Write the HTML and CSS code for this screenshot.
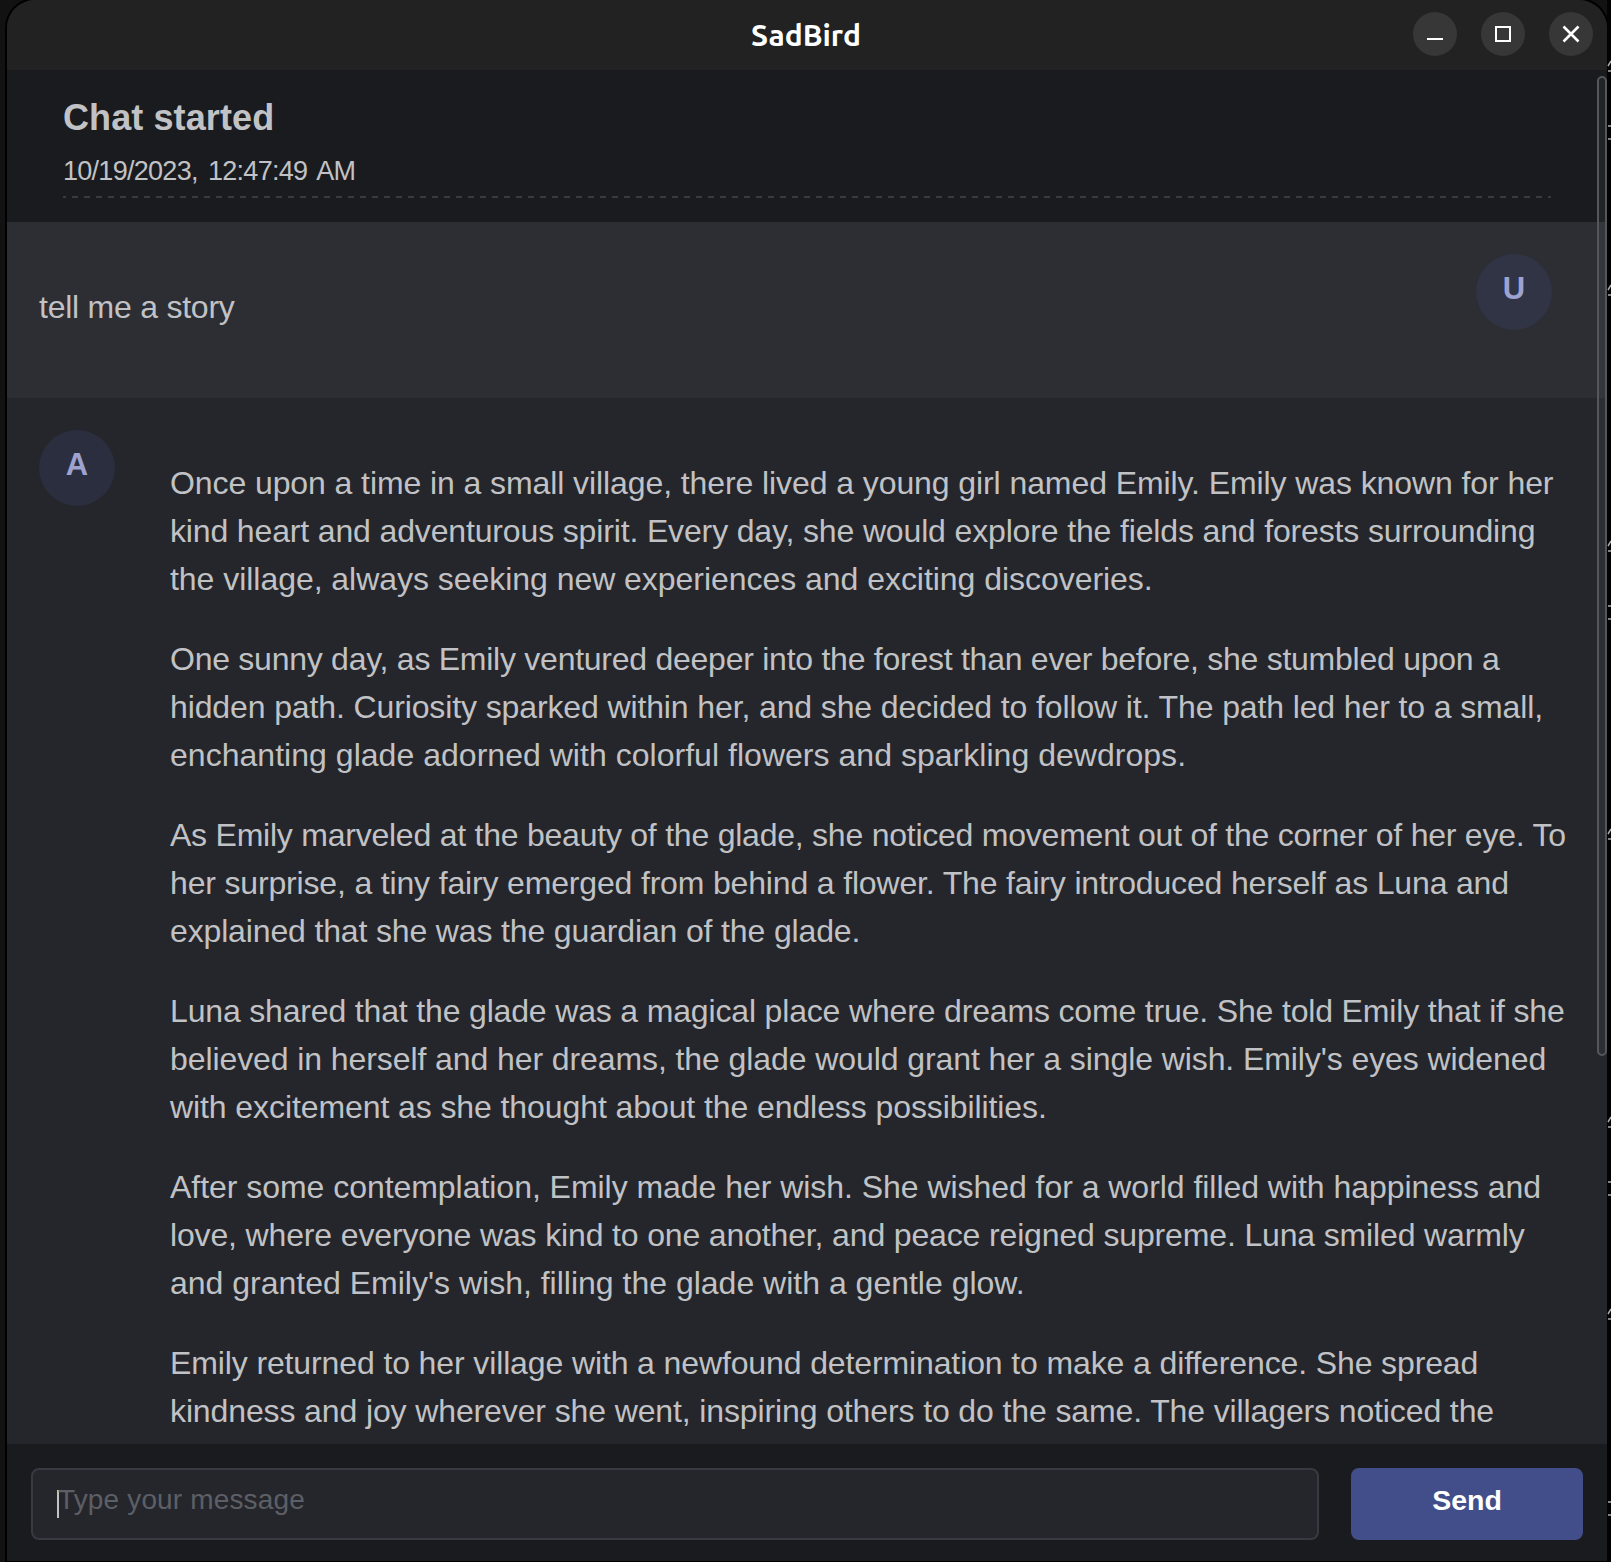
FILE: index.html
```
<!DOCTYPE html>
<html lang="en">
<head>
<meta charset="utf-8">
<title>SadBird</title>
<link rel="stylesheet" href="styles.css">
</head>
<body>
<div class="window">
  <header class="titlebar">
    <h1 class="title">SadBird</h1>
    <div class="controls">
      <button class="control" aria-label="Minimize"><svg viewBox="0 0 44 44"><path d="M14 27H30"/></svg></button>
      <button class="control" aria-label="Maximize"><svg viewBox="0 0 44 44"><path d="M15 15H29V29H15Z"/></svg></button>
      <button class="control close" aria-label="Close"><svg viewBox="0 0 44 44"><path d="M14.5 14.5L29.5 29.5M29.5 14.5L14.5 29.5"/></svg></button>
    </div>
  </header>
  <main class="chat">
    <section class="started">
      <h2 class="started-title">Chat started</h2>
      <time class="started-time">10/19/2023, 12:47:49 AM</time>
      <svg class="divider"><path d="M0 1H1488"/></svg>
    </section>
    <article class="message user">
      <p class="line">tell me a story</p>
      <span class="avatar">U</span>
    </article>
    <article class="message assistant">
      <span class="avatar">A</span>
      <div class="story">
        <p><span class="t2">Once upon a time in a small village, there lived a young girl named Emily. Emily was known for her</span><span class="t4">kind heart and adventurous spirit. Every day, she would explore the fields and forests surrounding</span><span class="t1">the village, always seeking new experiences and exciting discoveries.</span></p>
        <p><span class="t7">One sunny day, as Emily ventured deeper into the forest than ever before, she stumbled upon a</span><span class="t3">hidden path. Curiosity sparked within her, and she decided to follow it. The path led her to a small,</span><span class="wide">enchanting glade adorned with colorful flowers and sparkling dewdrops.</span></p>
        <p><span class="t6">As Emily marveled at the beauty of the glade, she noticed movement out of the corner of her eye. To</span><span class="t5">her surprise, a tiny fairy emerged from behind a flower. The fairy introduced herself as Luna and</span><span class="t4">explained that she was the guardian of the glade.</span></p>
        <p><span class="t5">Luna shared that the glade was a magical place where dreams come true. She told Emily that if she</span><span class="t2">believed in herself and her dreams, the glade would grant her a single wish. Emily's eyes widened</span><span class="t2">with excitement as she thought about the endless possibilities.</span></p>
        <p><span class="t1">After some contemplation, Emily made her wish. She wished for a world filled with happiness and</span><span class="t4">love, where everyone was kind to one another, and peace reigned supreme. Luna smiled warmly</span><span>and granted Emily's wish, filling the glade with a gentle glow.</span></p>
        <p><span class="t3">Emily returned to her village with a newfound determination to make a difference. She spread</span><span class="t3">kindness and joy wherever she went, inspiring others to do the same. The villagers noticed the</span></p>
      </div>
    </article>
    <div class="scrollbar"></div>
  </main>
  <footer class="composer">
    <div class="field"><span class="caret"></span><span class="placeholder">Type your message</span></div>
    <button class="send">Send</button>
  </footer>
</div>
<svg class="backdrop" viewBox="0 0 4 1562">
  <path d="M4 61L1 66M1 71H4M4 285L1 290M1 295H4M4 541L1 546M1 551H4M4 829L1 834M1 839H4M4 1117L1 1122M1 1127H4M4 1309L1 1314M1 1319H4"/>
  <path d="M1 126H4M1 139H4M1 606H4M1 619H4M1 1182H4M1 1195H4M1 1502H4M1 1515H4"/>
</svg>
</body>
</html>
```
FILE: styles.css
```
* { box-sizing: border-box; }
body { margin: 0; height: 1562px; overflow: hidden; display: flex; background: #121212; font-family: "Liberation Sans", Arial, sans-serif; color: #c1c2c5; }
h1, h2, p { margin: 0; }
button { border: 0; padding: 0; font-family: inherit; }
.window { flex: none; width: 1600px; height: 1561px; margin-left: 7px; display: flex; flex-direction: column; background: #1a1b1e; border-radius: 28px 28px 0 0; overflow: hidden; box-shadow: 0 0 0 2px #000; }
.backdrop { flex: none; width: 4px; height: 1562px; background: #030303; fill: none; stroke: #aaa; stroke-width: 1.5; }
.titlebar { height: 70px; display: grid; grid-template-columns: 1fr auto 1fr; align-items: center; background: #222; padding-right: 14px; }
.title { grid-column: 2; color: #fff; font: bold 30px/40px "Ubuntu", "Noto Sans", sans-serif; padding-left: 12px; }
.controls { display: flex; gap: 24px; justify-content: flex-end; margin-top: -2px; }
.control { width: 44px; height: 44px; border-radius: 50%; background: #373737; }
.control svg { display: block; width: 44px; height: 44px; fill: none; stroke: #fff; stroke-width: 2; }
.close svg { stroke-width: 2.6; }
.chat { position: relative; height: 1374px; overflow: hidden; display: flex; flex-direction: column; background: #25262b; }
.started { height: 152px; flex: none; padding: 24px 56px 0; background: #1a1b1e; display: flex; flex-direction: column; }
.started-title { font-size: 36px; line-height: 47px; letter-spacing: .1px; }
.started-time { font-size: 27px; line-height: 43px; margin-top: 9px; letter-spacing: -.72px; word-spacing: 3.5px; }
.divider { display: block; width: 1488px; height: 2px; margin-top: 3px; stroke: #373a40; stroke-width: 2; stroke-dasharray: 6 6; stroke-dashoffset: 3; }
.message { flex: none; display: flex; padding: 32px; font-size: 32px; line-height: 48px; white-space: nowrap; }
.user { height: 176px; justify-content: space-between; padding-right: 55px; background: #2c2e33; }
.line { padding-top: 29px; letter-spacing: -.24px; }
.assistant { gap: 55px; }
.story { padding-top: 29px; display: flex; flex-direction: column; gap: 32px; }
.story span { display: block; }
.wide { letter-spacing: .03px; }
.t1 { letter-spacing: -.04px; }
.t2 { letter-spacing: -.088px; }
.t3 { letter-spacing: -.12px; }
.t4 { letter-spacing: -.147px; }
.t5 { letter-spacing: -.164px; }
.t6 { letter-spacing: -.233px; }
.t7 { letter-spacing: -.254px; }
.avatar { flex: none; width: 76px; height: 76px; border-radius: 50%; background: #2b2e3e; color: #9ea2d0; font-weight: bold; font-size: 31px; line-height: 69px; text-align: center; }
.user .avatar { background: #313444; }
.scrollbar { position: absolute; top: 6px; right: 0; width: 10px; height: 980px; border: 2px solid #55565a; border-radius: 5px; background: rgba(255,255,255,.04); }
.composer { height: 117px; padding: 24px; display: flex; gap: 32px; }
.field { width: 1288px; height: 72px; border: 2px solid #373a40; border-radius: 8px; background: #25262b; padding: 0 24px; display: flex; font-size: 28px; line-height: 60px; color: #5c5f66; }
.placeholder { margin-left: -1px; letter-spacing: .15px; }
.caret { width: 2px; height: 28px; margin-top: 20px; background: #c1c2c5; }
.send { width: 232px; height: 72px; border-radius: 8px; background: #424e89; color: #fff; font-size: 28.5px; font-weight: bold; line-height: 64px; padding-bottom: 8px; }
```
